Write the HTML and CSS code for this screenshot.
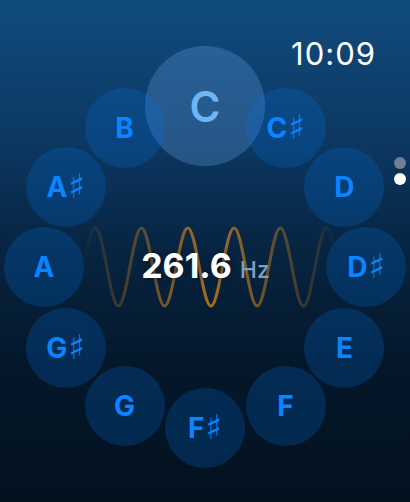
FILE: index.html
```html
<!DOCTYPE html>
<html lang="en">
<head>
    <meta charset="UTF-8">
    <meta name="viewport" content="width=device-width, initial-scale=1.0">
    <title>Tuner</title>
    <link rel="stylesheet" href="styles.css">
</head>
<body>
    <div class="screen">
        <header class="status">
            <span class="clock">10:09</span>
        </header>

        <div class="pager">
            <span class="dot"></span>
            <span class="dot active"></span>
        </div>

        <div class="dial">
            <svg class="wave" width="290" height="84" viewBox="-12 0 290 84">
                <defs>
                    <linearGradient id="fade" gradientUnits="userSpaceOnUse" x1="-12" y1="0" x2="278" y2="0">
                        <stop offset="0.08" stop-color="#c07a1e" stop-opacity="0"></stop>
                        <stop offset="0.13" stop-color="#c07a1e" stop-opacity="0.16"></stop>
                        <stop offset="0.31" stop-color="#c07a1e" stop-opacity="0.5"></stop>
                        <stop offset="0.52" stop-color="#c07a1e" stop-opacity="0.85"></stop>
                        <stop offset="0.73" stop-color="#c07a1e" stop-opacity="0.5"></stop>
                        <stop offset="0.9" stop-color="#c07a1e" stop-opacity="0.16"></stop>
                        <stop offset="0.95" stop-color="#c07a1e" stop-opacity="0"></stop>
                    </linearGradient>
                </defs>
                <path d="M0,81 C8.43,81 14.72,3 23.15,3 S37.87,81 46.3,81 S61.02,3 69.45,3 S84.17,81 92.6,81 S107.32,3 115.75,3 S130.47,81 138.9,81 S153.62,3 162.05,3 S176.77,81 185.2,81 S199.92,3 208.35,3 S223.07,81 231.5,81 S246.22,3 254.65,3 S269.37,81 277.8,81" fill="none" stroke="url(#fade)" stroke-width="3" stroke-linecap="round"></path>
            </svg>

            <div class="readout">
                <span class="freq">261.6</span>
                <span class="unit">Hz</span>
            </div>

            <div class="note n-c current">C</div>
            <div class="note n-cs">C<span class="sharp">♯</span></div>
            <div class="note n-d">D</div>
            <div class="note n-ds">D<span class="sharp">♯</span></div>
            <div class="note n-e">E</div>
            <div class="note n-f">F</div>
            <div class="note n-fs">F<span class="sharp">♯</span></div>
            <div class="note n-g">G</div>
            <div class="note n-gs">G<span class="sharp">♯</span></div>
            <div class="note n-a">A</div>
            <div class="note n-as">A<span class="sharp">♯</span></div>
            <div class="note n-b">B</div>
        </div>
    </div>
</body>
</html>
```

FILE: styles.css
```css
* {
    margin: 0;
    padding: 0;
    box-sizing: border-box;
}

body {
    font-family: 'Inter', 'Noto Sans', sans-serif;
    background: #03111f;
    color: white;
}

.screen {
    position: relative;
    width: 410px;
    height: 502px;
    overflow: hidden;
    background: linear-gradient(180deg, #114b7e 0%, #0c3862 28%, #072441 50%, #041729 74%, #03111f 100%);
}

/* 顶部时间 */
.status {
    height: 106px;
    padding: 36px 34px 0 0;
    display: flex;
    justify-content: flex-end;
}

.clock {
    font-size: 31px;
    line-height: 36px;
    font-weight: 400;
    letter-spacing: 1px;
}

.pager {
    position: absolute;
    top: 157px;
    right: 4px;
    display: flex;
    flex-direction: column;
    gap: 4px;
}

.dot {
    width: 12px;
    height: 12px;
    border-radius: 50%;
    background: #6f7e90;
}

.dot.active {
    background: #ffffff;
}

/* 音名转盘 */
.dial {
    position: relative;
    width: 322px;
    height: 322px;
    margin-left: 44px;
    display: grid;
    place-items: center;
}

.wave,
.readout {
    grid-area: 1 / 1;
}

.readout {
    display: flex;
    align-items: baseline;
    gap: 8px;
    line-height: 40px;
    padding-top: 2px;
    margin-left: 1px;
}

.freq {
    font-size: 34px;
    font-weight: 700;
    text-shadow: 0 0 6px rgba(0, 0, 0, 0.45);
}

.unit {
    font-size: 23px;
    font-weight: 500;
    color: #7f9fbe;
}

.note {
    position: absolute;
    width: 80px;
    height: 80px;
    transform: translate(-50%, -50%);
    border-radius: 50%;
    background: rgba(0, 120, 235, 0.22);
    display: flex;
    align-items: center;
    justify-content: center;
    color: #0a84ff;
    font-size: 28px;
    font-weight: 700;
}

.sharp {
    font-family: 'DejaVu Sans', sans-serif;
    font-weight: 400;
    font-size: 34px;
    line-height: 1;
    margin-left: 1px;
    position: relative;
    top: -1px;
}

.note.current {
    width: 120px;
    height: 120px;
    background: rgba(120, 180, 255, 0.25);
    color: #6cb6f8;
    font-size: 42px;
    font-weight: 600;
}

.n-c  { left: 161px;    top: 0; }
.n-cs { left: 241.5px;  top: 21.57px; }
.n-d  { left: 300.43px; top: 80.5px; }
.n-ds { left: 322px;    top: 161px; }
.n-e  { left: 300.43px; top: 241.5px; }
.n-f  { left: 241.5px;  top: 300.43px; }
.n-fs { left: 161px;    top: 322px; }
.n-g  { left: 80.5px;   top: 300.43px; }
.n-gs { left: 21.57px;  top: 241.5px; }
.n-a  { left: 0;        top: 161px; }
.n-as { left: 21.57px;  top: 80.5px; }
.n-b  { left: 80.5px;   top: 21.57px; }
```
